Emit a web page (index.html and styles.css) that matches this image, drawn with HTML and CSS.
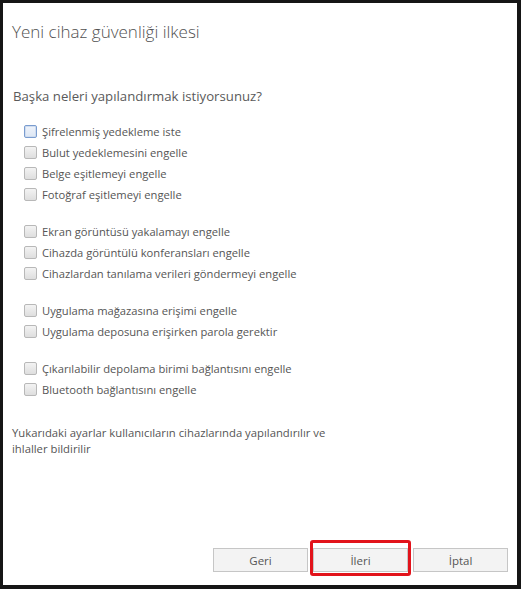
FILE: index.html
```html
<!DOCTYPE html>
<html lang="tr">
<head>
<meta charset="utf-8">
<link rel="stylesheet" href="styles.css">
</head>
<body>
<div class="frame">
  <div class="dialog">
    <h1 class="title">Yeni cihaz güvenliği ilkesi</h1>
    <h2 class="question">Başka neleri yapılandırmak istiyorsunuz?</h2>
    <div class="groups">
      <ul class="group">
        <li class="item"><span class="box focus"></span>Şifrelenmiş yedekleme iste</li>
        <li class="item"><span class="box"></span>Bulut yedeklemesini engelle</li>
        <li class="item"><span class="box"></span>Belge eşitlemeyi engelle</li>
        <li class="item"><span class="box"></span>Fotoğraf eşitlemeyi engelle</li>
      </ul>
      <ul class="group">
        <li class="item"><span class="box"></span>Ekran görüntüsü yakalamayı engelle</li>
        <li class="item"><span class="box"></span>Cihazda görüntülü konferansları engelle</li>
        <li class="item"><span class="box"></span>Cihazlardan tanılama verileri göndermeyi engelle</li>
      </ul>
      <ul class="group">
        <li class="item"><span class="box"></span>Uygulama mağazasına erişimi engelle</li>
        <li class="item"><span class="box"></span>Uygulama deposuna erişirken parola gerektir</li>
      </ul>
      <ul class="group">
        <li class="item"><span class="box"></span>Çıkarılabilir depolama birimi bağlantısını engelle</li>
        <li class="item"><span class="box"></span>Bluetooth bağlantısını engelle</li>
      </ul>
    </div>
    <p class="note">Yukarıdaki ayarlar kullanıcıların cihazlarında yapılandırılır ve<br>ihlaller bildirilir</p>
    <div class="buttons">
      <button class="btn">Geri</button>
      <div class="highlight-wrap">
        <button class="btn">İleri</button>
        <span class="highlight"></span>
      </div>
      <button class="btn">İptal</button>
    </div>
  </div>
</div>
</body>
</html>
```
FILE: styles.css
```css
html, body {
  margin: 0;
  padding: 0;
  background: #161616;
}
body {
  width: 521px;
  height: 589px;
  overflow: hidden;
  font-family: "Open Sans", "Noto Sans", sans-serif;
}
.frame {
  padding: 3px 4px 4px 3px;
  height: 589px;
  box-sizing: border-box;
}
.dialog {
  background: #ffffff;
  height: 100%;
  display: flex;
  flex-direction: column;
  padding: 15px 9px 13px 9px;
  box-sizing: border-box;
  color: #555;
}
.title {
  margin: 0;
  font-weight: 300;
  font-size: 17px;
  line-height: 28px;
  color: #505050;
}
.question {
  margin: 39px 0 0 1px;
  font-weight: 400;
  font-size: 13.2px;
  line-height: 22px;
  color: #5a5a5a;
}
.groups {
  margin-top: 14px;
  display: flex;
  flex-direction: column;
  gap: 16px;
}
.group {
  list-style: none;
  margin: 0;
  padding: 0 0 0 12px;
}
.item {
  display: flex;
  align-items: center;
  height: 21px;
  font-size: 11.2px;
  color: #555;
}
.box {
  width: 11px;
  height: 11px;
  border: 1px solid #b8b8b8;
  border-radius: 2px;
  background: linear-gradient(#f3f3f3, #dedede);
  margin-right: 5px;
  flex: none;
}
.box.focus {
  border-color: #7a9ccf;
  background: linear-gradient(#eef3fb, #dde6f3);
  box-shadow: inset 0 0 0 1px #cfdcef;
}
.note {
  margin: 25px 0 0 0;
  font-size: 11.3px;
  line-height: 16px;
  color: #555;
}
.buttons {
  margin-top: auto;
  display: flex;
  justify-content: flex-end;
  gap: 5px;
}
.btn {
  width: 95px;
  height: 24px;
  border: 1px solid #c6c6c6;
  background: #f3f3f3;
  font-family: "Open Sans", "Noto Sans", sans-serif;
  font-size: 11.5px;
  color: #555;
  padding: 0;
}
.highlight-wrap {
  position: relative;
  display: flex;
}
.highlight {
  position: absolute;
  left: -3px;
  right: -3px;
  top: -8px;
  bottom: -4px;
  border: 3px solid #e2131b;
  border-radius: 3px;
  pointer-events: none;
}
```
